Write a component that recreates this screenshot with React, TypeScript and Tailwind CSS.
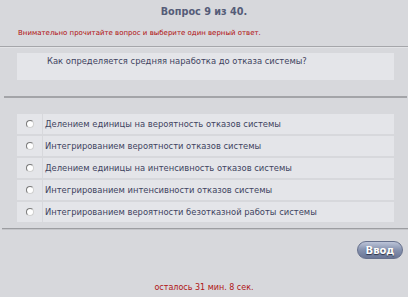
const options = [
  'Делением единицы на вероятность отказов системы',
  'Интегрированием вероятности отказов системы',
  'Делением единицы на интенсивность отказов системы',
  'Интегрированием интенсивности отказов системы',
  'Интегрированием вероятности безотказной работы системы',
];

function Radio() {
  return (
    <span className="block h-[8px] w-[8px] rounded-full border border-t-[#7a7a7a] border-l-[#7a7a7a] border-r-[#d0d0d0] border-b-[#d0d0d0] bg-white" />
  );
}

export default function App() {
  return (
    <div
      className="h-[297px] w-[408px] overflow-hidden bg-[#d7d8dc]"
      style={{ fontFamily: "'DejaVu Sans', Verdana, sans-serif" }}
    >
      <div className="pt-[5px] text-center text-[9.7px] font-bold leading-[14px] text-[#555c78]">Вопрос 9 из 40.</div>

      <div className="mt-[9px] pl-[18px] text-[7px] leading-[10px] text-[#b00d0d]">
        Внимательно прочитайте вопрос и выберите один верный ответ.
      </div>

      <div className="mt-[8px] h-[1px] bg-[#a5a6aa]" />
      <div className="h-[1px] bg-[#e2e3e6]" />

      <div className="ml-[17px] mt-[5px] h-[27px] w-[377px] bg-[#e4e5e9] pl-[30px] pt-[3px] text-[8.4px] leading-[11px] text-[#3e4360]">
        Как определяется средняя наработка до отказа системы?
      </div>

      <div className="ml-[4px] mr-[1px] mt-[16px] h-[2px] bg-[#a3a4a8]" />

      <div className="ml-[17px] mt-[16px] flex w-[377px] flex-col gap-[2px]">
        {options.map((o) => (
          <div key={o} className="flex h-[20px] gap-[1px]">
            <div className="flex w-[25px] items-center justify-center bg-[#e4e5e9]">
              <Radio />
            </div>
            <div className="flex flex-1 items-center bg-[#e4e5e9] pl-[2px] pt-[1px] text-[8.4px] text-[#3e4360]">{o}</div>
          </div>
        ))}
      </div>

      <div className="ml-[2px] mt-[6px] h-[1px] bg-[#9c9da1]" />
      <div className="ml-[2px] h-[1px] bg-[#c4c5c9]" />

      <div className="mt-[11px] flex justify-end pr-[5px]">
        <button className="flex h-[18px] w-[46px] items-center justify-center rounded-full border border-[#66708c] bg-gradient-to-b from-[#bcc4d8] via-[#8591ae] to-[#6a7696] text-[10px] font-semibold text-white [text-shadow:0_1px_1px_#2a3045]">
          Ввод
        </button>
      </div>

      <div className="mt-[24px] text-center text-[8px] leading-[10px] text-[#b01515]">осталось 31 мин. 8 сек.</div>
    </div>
  );
}
